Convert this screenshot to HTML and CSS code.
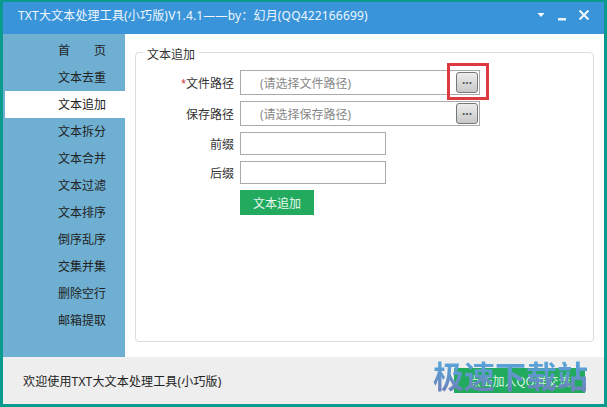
FILE: index.html
```html
<!DOCTYPE html>
<html lang="zh">
<head>
<meta charset="utf-8">
<title>TXT大文本处理工具</title>
<link rel="stylesheet" href="styles.css">
</head>
<body>
<div class="window">
  <header class="titlebar">
    <span class="title">TXT大文本处理工具(小巧版)V1.4.1——by：幻月(QQ422166699)</span>
    <div class="controls">
      <svg width="10" height="6" viewBox="0 0 10 6"><path d="M1.500 1H8.500L5 5Z" fill="#fff"/></svg>
      <svg class="min-icon" width="10" height="10" viewBox="0 0 10 10"><rect x="1" y="5" width="8" height="2.500" fill="#e6f3fb"/></svg>
      <svg width="12" height="12" viewBox="0 0 12 12"><path d="M1.500 1.500L10.500 10.500M10.500 1.500L1.500 10.500" stroke="#e8f6fc" stroke-width="2.200"/></svg>
    </div>
  </header>
  <div class="main">
    <nav class="sidebar">
      <a class="nav-item"><span class="spread"><span>首</span><span>页</span></span></a>
      <a class="nav-item">文本去重</a>
      <a class="nav-item active">文本追加</a>
      <a class="nav-item">文本拆分</a>
      <a class="nav-item">文本合并</a>
      <a class="nav-item">文本过滤</a>
      <a class="nav-item">文本排序</a>
      <a class="nav-item">倒序乱序</a>
      <a class="nav-item">交集并集</a>
      <a class="nav-item">删除空行</a>
      <a class="nav-item">邮箱提取</a>
    </nav>
    <main class="content">
      <fieldset class="panel">
        <legend class="legend">文本追加</legend>
        <div class="row row-file">
          <label class="label"><span class="req">*</span>文件路径</label>
          <div class="input input-wide"><span class="ph">(请选择文件路径)</span><button class="browse">...</button></div>
        </div>
        <div class="row">
          <label class="label">保存路径</label>
          <div class="input input-wide"><span class="ph">(请选择保存路径)</span><button class="browse">...</button></div>
        </div>
        <div class="row row-short">
          <label class="label">前缀</label>
          <div class="input input-short"></div>
        </div>
        <div class="row row-short">
          <label class="label">后缀</label>
          <div class="input input-short"></div>
        </div>
        <div class="row-action"><button class="primary">文本追加</button></div>
      </fieldset>
      <div class="highlight"></div>
    </main>
  </div>
  <footer class="statusbar">
    <span class="status-text">欢迎使用TXT大文本处理工具(小巧版)</span>
    <button class="qq">点击加入QQ群交流</button>
  </footer>
  <div class="watermark">极速下载站</div>
</div>
</body>
</html>
```
FILE: styles.css
```css
* { box-sizing: border-box; }
html, body { margin: 0; padding: 0; }
body {
  width: 607px;
  height: 407px;
  overflow: hidden;
  font-family: "Noto Sans", "Noto Sans CJK SC", sans-serif;
  font-size: 12px;
  color: #333;
}
.window {
  position: relative;
  width: 607px;
  height: 407px;
  display: flex;
  flex-direction: column;
  border: 3px solid #0a9a8e;
  border-top-width: 2px;
  background: #fff;
}
.titlebar {
  flex: 0 0 32px;
  background: #3a94d9;
  color: #fff;
  display: flex;
  align-items: center;
  justify-content: space-between;
  padding: 0 14px 6px 15px;
}
.title { font-size: 12px; color: #eef7fd; letter-spacing: 0.17px; }
.controls { display: flex; align-items: center; gap: 11px; }
.min-icon { margin-top: 5px; }
.main { flex: 1; display: flex; min-height: 0; }
.sidebar {
  flex: 0 0 122px;
  background: #6fb0d2;
  padding-top: 3px;
  display: flex;
  flex-direction: column;
}
.nav-item {
  height: 27px;
  line-height: 27px;
  padding-left: 55px;
  font-size: 12px;
  color: #222;
}
.nav-item.active { background: #fff; margin-left: 2px; padding-left: 53px; }
.spread { display: flex; width: 48px; justify-content: space-between; }
.content { flex: 1; position: relative; padding: 7px 0 0 10px; }
.panel {
  margin: 0;
  width: 459px;
  height: 301px;
  border: 1px solid #ddd;
  border-radius: 4px;
  padding: 0;
}
.legend { margin-left: 7px; padding: 6px 4px 0; font-size: 12px; color: #333; line-height: 16px; }
.row { display: flex; align-items: center; height: 25px; margin-bottom: 6px; }
.row-file { margin-top: 7px; }
.row-short { height: 23px; }
.label { width: 98px; text-align: right; font-size: 12px; color: #333; margin-right: 6px; }
.req { color: #c33; font-family: "Liberation Sans", sans-serif; }
.input {
  height: 25px;
  border: 1px solid #aaa;
  background: #fff;
  display: flex;
  align-items: center;
  justify-content: space-between;
}
.input-wide { width: 240px; padding: 0 1px 0 19px; }
.input-short { width: 146px; height: 23px; }
.ph { color: #888; font-size: 12px; }
.browse {
  width: 22px;
  height: 21px;
  padding: 0 0 6px;
  border: 1px solid #777;
  border-radius: 3px;
  background: linear-gradient(#ececec, #c8c8c8);
  font-size: 12px;
  line-height: 12px;
  font-weight: 700;
  color: #555;
  font-family: "Liberation Sans", sans-serif;
}
.row-action { padding-left: 104px; }
.primary {
  width: 74px;
  height: 25px;
  border: 0;
  padding: 0;
  background: #22ab5e;
  color: #e8f7ee;
  font: 12px "Noto Sans CJK SC", sans-serif;
}
.highlight {
  position: absolute;
  left: 322px;
  top: 29px;
  width: 42px;
  height: 37px;
  border: 3px solid #dc3a3f;
}
.statusbar {
  flex: 0 0 47px;
  background: #eeeeee;
  display: flex;
  align-items: center;
  justify-content: space-between;
  padding: 0 19px 0 20px;
  font-size: 12px;
  color: #222;
}
.status-text { letter-spacing: 0.15px; }
.qq {
  width: 131px;
  height: 25px;
  border: 0;
  padding: 0;
  background: #22ab5e;
  color: #d8f5e5;
  font: 12px "Noto Sans CJK SC", sans-serif;
}
.watermark {
  position: absolute;
  left: 430px;
  top: 356px;
  font-size: 31px;
  line-height: 36px;
  font-weight: 700;
  white-space: nowrap;
  background: linear-gradient(#54a9dd, #6f7fb8);
  -webkit-background-clip: text;
  background-clip: text;
  color: transparent;
}
```
